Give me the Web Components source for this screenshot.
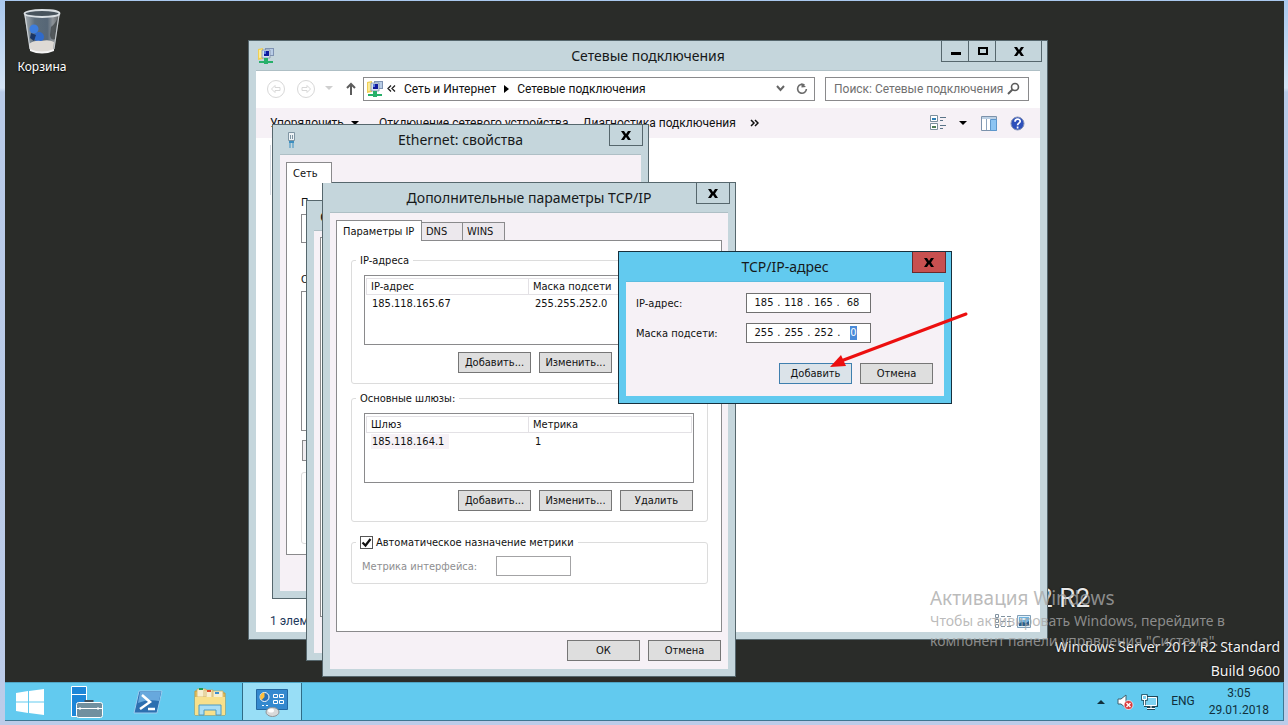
<!DOCTYPE html>
<html lang="ru">
<head>
<meta charset="utf-8">
<title>Сетевые подключения</title>
<style>
html, body { height: 100%; margin: 0; }
body {
  --ui: "Noto Sans", "Open Sans", sans-serif;
  --nav: Roboto, "Noto Sans", sans-serif;
  --dlg: "DejaVu Sans Condensed", "DejaVu Sans", sans-serif;
  --face: #f6f1f6;
  --line: #8a8a8c;
  font: 12px/16px var(--ui);
  color: #111;
  overflow: hidden;
}
</style>
</head>
<body>
<remote-desktop></remote-desktop>

<script>
const define = (name, html, setup) => {
  const template = document.createElement('template');
  template.innerHTML = html;
  customElements.define(name, class extends HTMLElement {
    constructor() {
      super();
      this.attachShadow({ mode: 'open' }).append(template.content.cloneNode(true));
    }
    connectedCallback() {
      if (setup && !this.ready) { this.ready = true; setup(this, this.shadowRoot); }
    }
  });
};

/* Window frame with title bar and caption buttons */
define('desk-window', `
<style>
:host { display: flex; flex-direction: column; box-sizing: border-box; background: #c5d6dc; border: 1px solid #56676d; padding: 0 7px 7px; --edge: #aebfc5; }
:host([active]) { background: #62caef; border-color: #17303d; --edge: #5bbde0; }
header { display: grid; grid-template-columns: 1fr auto 1fr; height: 29px; flex: none; }
h2 { margin: 0; font: 14px/29px var(--ui); grid-column: 2; white-space: nowrap; color: #16191a; }
.icon { display: flex; align-items: center; padding-left: 2px; }
.ctl { display: flex; justify-content: flex-end; align-items: flex-start; margin-right: -2px; }
button { box-sizing: border-box; height: 21px; width: 34px; padding: 0; border: 1px solid #56676d; border-top: 0; background: none; display: grid; place-items: center; }
.min, .max { display: none; width: 27px; border-right: 0; }
:host([resizable]) .min, :host([resizable]) .max { display: grid; }
:host([resizable]) .close { width: 47px; }
:host([active]) .close { background: #c75050; border-color: #6b2a2c; }
:host([bare]) .ctl { visibility: hidden; }
main { flex: 1; min-height: 0; display: flex; flex-direction: column; background: var(--face); border: solid var(--edge); border-width: 1px 0 0; }
:host([resizable]) main { background: #fff; }
</style>
<header>
  <div class="icon"><slot name="icon"></slot></div>
  <h2></h2>
  <div class="ctl">
    <button class="min" aria-label="Свернуть"><svg width="11" height="10"><path d="M1 6h10v3H1z"/></svg></button>
    <button class="max" aria-label="Развернуть"><svg width="11" height="10"><path d="M2 2h8v6H2z" fill="none" stroke="#000" stroke-width="2"/></svg></button>
    <button class="close" aria-label="Закрыть"><svg width="10" height="9"><path d="M0 0h3l2 3 2-3h3L7 4.500l3 4.500H7L5 6 3 9H0l3-4.500z"/></svg></button>
  </div>
</header>
<main><slot></slot></main>`, (el, root) => { root.querySelector('h2').textContent = el.getAttribute('caption'); });

define('dlg-button', `
<style>
:host { display: block; }
button { box-sizing: border-box; width: 73px; height: 21px; padding: 0; font: 11px/17px var(--dlg); color: #111; background: #dedede; border: 1px solid #767676; white-space: nowrap; }
:host([default]) button { border-color: #3f7fae; background: #dbe3e9; }
</style>
<button type="button"><slot></slot></button>`);

define('group-box', `
<style>
:host { display: block; }
fieldset { margin: 0; padding: 0 13px 10px 12px; border: 1px solid #dcdcdc; border-radius: 3px; min-width: 0; }
:host([checkable]) fieldset { padding-bottom: 7px; }
legend { margin-left: -8px; padding: 0 4px; font: 11px/15px var(--dlg); }
label { display: flex; align-items: center; gap: 3px; }
input { appearance: none; width: 13px; height: 13px; margin: 0; border: 1px solid #555; background: #fff; display: grid; }
input:checked { background: #fff url("data:image/svg+xml,%3Csvg xmlns='http://www.w3.org/2000/svg' viewBox='0 0 11 11'%3E%3Cpath d='M1.500 5.500l3 3L9.500 2' fill='none' stroke='%23111' stroke-width='2.200'/%3E%3C/svg%3E"); }
</style>
<fieldset><legend></legend><slot></slot></fieldset>`, (el, root) => {
  const legend = root.querySelector('legend');
  if (el.hasAttribute('checkable')) {
    legend.innerHTML = '<label><input type="checkbox" checked><span></span></label>';
    legend.querySelector('span').textContent = el.getAttribute('caption');
  } else legend.textContent = el.getAttribute('caption');
});

define('list-table', `
<style>
:host { display: block; box-sizing: border-box; height: 70px; border: 1px solid var(--line); background: #fff; padding: 2px 1px; font: 11px/15px var(--dlg); }
table { width: 100%; border-collapse: separate; border-spacing: 0; table-layout: fixed; }
th, td { font-weight: normal; text-align: left; padding: 0 4px; }
th { height: 15px; border: 1px solid #e3e1e5; border-left-width: 0; }
th:first-child { border-left-width: 1px; width: 153px; }
td { padding: 1px 6px 0; }
span { display: inline-block; }
:host([marked]) td:first-child span { background: var(--face); padding: 0 5px 0 1px; margin-left: -1px; }
</style>
<table><thead><tr></tr></thead><tbody><tr></tr></tbody></table>`, (el, root) => {
  const fill = (row, tag, list) => list.split('|').forEach(t => {
    const cell = document.createElement(tag), span = document.createElement('span');
    span.textContent = t; cell.append(span); row.append(cell);
  });
  fill(root.querySelector('thead tr'), 'th', el.getAttribute('head'));
  fill(root.querySelector('tbody tr'), 'td', el.getAttribute('row'));
});

/* Four-octet address entry */
define('ip-field', `
<style>
:host { display: flex; align-items: center; justify-content: space-between; font: 11px/15px var(--dlg); }
.box { box-sizing: border-box; width: 125px; height: 20px; padding: 0 4px; display: flex; align-items: center; background: #fff; border: 1px solid #707070; }
.part { width: 26px; display: flex; justify-content: center; }
i { width: 4px; font-style: normal; line-height: 14px; text-align: center; }
input { width: 26px; height: 14px; padding: 0; border: 0; text-align: center; background: none; font: 11px/14px var(--dlg); color: #111; outline: 0; }
.sel input { width: 7px; background: #4a8ad8; color: #fff; }
</style>
<label for="a"></label><div class="box"></div>`, (el, root) => {
  root.querySelector('label').textContent = el.getAttribute('caption');
  const box = root.querySelector('.box');
  el.getAttribute('value').split('.').forEach((v, n) => {
    if (n) { const dot = document.createElement('i'); dot.textContent = '.'; box.append(dot); }
    const part = document.createElement('span'), input = document.createElement('input');
    part.className = 'part' + (n === 3 && el.hasAttribute('selected') ? ' sel' : '');
    if (n) input.setAttribute('aria-label', el.getAttribute('caption') + ' ' + (n + 1)); else input.id = 'a';
    input.value = v; part.append(input); box.append(part);
  });
});

define('tab-panel', `
<style>
:host { display: flex; flex-direction: column; font: 11px/15px var(--dlg); }
nav { display: flex; align-items: flex-end; flex: none; }
button { box-sizing: border-box; height: 18px; padding: 0 4px; text-align: left; font: inherit; color: #111; background: #ece8ed; border: 1px solid var(--line); border-width: 1px 1px 0 0; white-space: nowrap; }
button:first-child { height: 21px; margin-bottom: -1px; padding: 0 6px; background: #fff; border-left-width: 1px; z-index: 1; }
section { flex: 1; min-height: 0; background: #fff; border: 1px solid var(--line); padding: 0 13px 0 14px; display: flex; flex-direction: column; }
</style>
<nav role="tablist"></nav><section><slot></slot></section>`, (el, root) => {
  (el.getAttribute('tabs') || '').split('|').filter(Boolean).forEach((t, n) => {
    const [text, width] = t.split(':'), b = document.createElement('button');
    b.type = 'button'; b.role = 'tab'; b.textContent = text; b.style.width = width + 'px';
    root.querySelector('nav').append(b);
  });
});

define('net-icon', `
<style>:host { display: block; width: 16px; height: 16px; } svg { display: block; }</style>
<svg width="16" height="16" viewBox="0 0 16 16">
  <path d="M0 1l5-1v11l-5 1z" fill="#f0cf55"/><path d="M1 2l3-.5v8L1 10z" fill="#fbec9a"/>
  <path d="M7 0h9v8H7z" fill="#7f93b3"/><path d="M8 1h7v6H8z" fill="#b9cde6"/>
  <path d="M4 2h8v8H4z" fill="#d7e2ee" stroke="#8291a8" stroke-width=".8"/><path d="M6 3h5v5H6z" fill="#10199c"/><path d="M6 3h2v3H6z" fill="#5d7fe0"/>
  <path d="M6 10h4v3h5v2h-5v1H6v-1H1v-2h5z" fill="#27b06a"/>
</svg>`);

/* Address row, command row, and status row of the folder window */
define('folder-view', `
<style>
:host { display: flex; flex-direction: column; flex: 1; min-height: 0; font: 12px/16px var(--nav); color: #111; }
.nav { display: flex; align-items: center; height: 35px; padding: 0 11px 2px 10px; flex: none; }
.nav button { border: 0; background: none; padding: 0; display: grid; place-items: center; height: 20px; width: 20px; }
.nav .fwd { margin-left: 10px; }
.nav .hist { margin-left: 3px; }
.nav .up { margin: 0 2px; }
.addr { flex: 1; min-width: 0; display: flex; align-items: center; gap: 8px; height: 22px; border: 1px solid var(--line); margin-right: 10px; padding: 0 2px 0 3px; }
.addr a { color: inherit; text-decoration: none; white-space: nowrap; }
.addr .gap { flex: 1; }
.addr net-icon { margin-right: -4px; }
.search { display: flex; align-items: center; width: 202px; height: 22px; border: 1px solid var(--line); }
.search input { flex: 1; min-width: 0; border: 0; background: none; padding: 0 0 0 8px; font: inherit; outline: 0; }
.search input::placeholder { color: #707070; opacity: 1; }
.search svg { margin: 0 8px 0 0; }
.bar { display: flex; align-items: center; height: 30px; padding: 0 15px 0 14px; background: var(--face); flex: none; }
.bar button { border: 0; background: none; padding: 0; font: inherit; color: inherit; white-space: nowrap; display: flex; align-items: center; }
.cmd { margin-right: 14px; }
.cmd svg { margin-left: 7px; }
.org { margin-right: 20px; }
.bar .push { margin-left: auto; }
.list { flex: 1; padding: 7px 14px; }
.item { width: 60px; height: 50px; border-left: 1px solid #d8dde4; }
footer { display: flex; align-items: center; height: 22px; padding: 0 9px 0 14px; color: #1e395b; flex: none; }
footer svg { margin-left: 6px; } footer .push { margin-left: auto; }
</style>
<div class="nav">
  <button aria-label="Назад"><svg width="20" height="20" fill="none" stroke="#d8d8d8"><circle cx="10" cy="10" r="8.500"/><path d="M5.500 10L9 6.500v2h5v3H9v2z"/></svg></button>
  <button class="fwd" aria-label="Вперед"><svg width="20" height="20" fill="none" stroke="#d8d8d8"><circle cx="10" cy="10" r="8.500"/><path d="M14.500 10L11 6.500v2H6v3h5v2z"/></svg></button>
  <button class="hist" aria-label="Журнал"><svg width="8" height="5"><path d="M0 0h8L4 4z" fill="#cfcfcf"/></svg></button>
  <button class="up" aria-label="Вверх"><svg width="10" height="13" fill="none" stroke="#5c5c5c" stroke-width="2"><path d="M5 13V2M1 6l4-4 4 4"/></svg></button>
  <div class="addr">
    <net-icon></net-icon><svg width="9" height="7" fill="none" stroke="#222" stroke-width="1.300"><path d="M4 .5L1 3.500l3 3M8 .5L5 3.500l3 3"/></svg><a href="#">Сеть и Интернет</a>
    <svg width="5" height="8"><path d="M0 0l5 4-5 4z"/></svg><a href="#">Сетевые подключения</a>
    <span class="gap"></span>
    <button aria-label="Предыдущие расположения" style="margin-right:-6px"><svg width="9" height="7" fill="none" stroke="#666" stroke-width="2"><path d="M1 1l3.500 4L8 1"/></svg></button>
    <button aria-label="Обновить"><svg width="12" height="12" fill="none" stroke="#6b6b6b" stroke-width="1.600"><path d="M8.500 2.200A4.400 4.400 0 1 0 10.400 6"/><path d="M5.500 0v4.500L10 4z" fill="#6b6b6b" stroke="none"/></svg></button>
  </div>
  <div class="search"><input type="text" aria-label="Поиск" placeholder="Поиск: Сетевые подключения"><svg width="13" height="13" fill="none" stroke="#5c5c5c"><circle cx="8" cy="5" r="3.500" stroke-width="1.600"/><path d="M5.500 7.500L1 12" stroke-width="2"/></svg></div>
</div>
<div class="bar">
  <button class="cmd org">Упорядочить<svg width="8" height="4"><path d="M0 0h8L4 4z"/></svg></button>
  <button class="cmd">Отключение сетевого устройства</button>
  <button class="cmd">Диагностика подключения</button>
  <button aria-label="Дополнительно"><svg width="9" height="8" fill="none" stroke="#111" stroke-width="1.500"><path d="M1 1l3 3-3 3M5 1l3 3-3 3"/></svg></button>
  <button class="push" aria-label="Вид"><svg width="33" height="16"><g fill="#fff" stroke="#7d8f9d"><path d="M.5.5h7v6h-7zM.5 8.500h7v6h-7z"/></g><path d="M2 3h4v2H2z" fill="#2f7fb4"/><path d="M2 11h4v2H2z" fill="#4f7a52"/><path d="M10 2.500h6M10 5.500h3M10 10.500h6M10 13.500h3" stroke="#5a7488"/></svg></button>
  <svg width="8" height="4" style="margin-left:-4px"><path d="M0 0h8L4 4z"/></svg>
  <button aria-label="Область просмотра" style="margin-left:14px"><svg width="17" height="15"><path d="M.5.500h15v14H.500z" fill="#fff" stroke="#7c92ab"/><path d="M1 1h14v2H1z" fill="#bcd0e4"/><path d="M5.500 3v11" stroke="#8ea4bd"/><path d="M9.500 3.500h6v11h-6z" fill="#8cc4f2" stroke="#5c97cd"/></svg></button>
  <button aria-label="Справка" style="margin-left:12px"><svg width="15" height="15"><circle cx="7.500" cy="7.500" r="6.500" fill="#2e50bb" stroke="#8493b8"/><path d="M5 5.800c0-3.600 5.200-3.400 5.200-.6 0 2-2.600 1.800-2.600 4M7.600 10.500v2" fill="none" stroke="#fff" stroke-width="1.700"/></svg></button>
</div>
<div class="list"><div class="item"></div></div>
<footer><span>1 элемент</span>
  <svg class="push" width="16" height="14"><g fill="none" stroke="#8293a0"><path d="M.5.500h3v3h-3zM.5 5.500h3v3h-3zM.5 10.500h3v3h-3z"/><path d="M6 2.500h4M12 2.500h4M6 7.500h4M12 7.500h4M6 12.500h4M12 12.500h4"/></g></svg>
  <svg width="14" height="13"><path d="M.5.500h13v12H.500z" fill="#e3f1fb" stroke="#7f9fb7"/><path d="M2 2h10v9H2z" fill="#6db3e0"/><path d="M2 11V8l4-1 3 1 3-2v5z" fill="#2a5f8c"/><path d="M3 3h6v2H3z" fill="#d3edfb"/></svg>
</footer>`);

define('ethernet-form', `
<style>
:host { display: flex; flex-direction: column; flex: 1; padding: 7px 6px 36px 6px; font: 11px/15px var(--dlg); }
tab-panel { flex: 1; }
p { margin: 12px 0 4px; } p + div { border: 1px solid var(--line); height: 27px; flex: none; }
.second { margin-top: 29px; }
.second + div { height: 138px; }
.btn { margin: 9px 0 0 1px; width: 80px; height: 19px; background: #f0edf1; border: 1px solid var(--line); }
.grp { margin-top: 11px; height: 70px; border: 1px solid #dcdcdc; border-radius: 3px; }
</style>
<tab-panel tabs="Сеть:46"><p>П</p><div></div><p class="second">О</p><div></div><div class="btn"></div><div class="grp"></div></tab-panel>`);

define('protocol-form', `
<style>
:host { display: flex; flex: 1; padding: 6px 6px 36px; }
div { flex: 1; border: 1px solid var(--line); background: #fff; }
</style><div></div>`);

define('advanced-form', `
<style>
:host { display: flex; flex-direction: column; flex: 1; min-height: 0; padding: 7px 6px 8px; font: 11px/15px var(--dlg); }
tab-panel { flex: 1; min-height: 0; }
group-box { flex: none; margin-top: 12px; }
group-box + group-box { margin-top: 7px; }
list-table { margin-top: 7px; }
.row { display: flex; justify-content: flex-end; gap: 8px; padding: 7px 1px 0 0; }
group-box.last { margin-top: 13px; }
.metric { display: flex; align-items: center; padding: 6px 0 0; }
.metric label { width: 134px; margin-left: -2px; color: #8e8e90; }
.metric input { box-sizing: border-box; width: 75px; height: 20px; border: 1px solid #a3a3a5; background: #fff; }
.actions { display: flex; justify-content: flex-end; gap: 8px; padding: 8px 1px 0; }
</style>
<tab-panel tabs="Параметры IP:86|DNS:41|WINS:42">
  <group-box caption="IP-адреса">
    <list-table head="IP-адрес|Маска подсети" row="185.118.165.67|255.255.252.0"></list-table>
    <div class="row"><dlg-button>Добавить...</dlg-button><dlg-button>Изменить...</dlg-button><dlg-button>Удалить</dlg-button></div>
  </group-box>
  <group-box caption="Основные шлюзы:">
    <list-table marked head="Шлюз|Метрика" row="185.118.164.1|1"></list-table>
    <div class="row"><dlg-button>Добавить...</dlg-button><dlg-button>Изменить...</dlg-button><dlg-button>Удалить</dlg-button></div>
  </group-box>
  <group-box class="last" checkable caption="Автоматическое назначение метрики">
    <div class="metric"><label for="metric">Метрика интерфейса:</label><input id="metric" disabled></div>
  </group-box>
</tab-panel>
<div class="actions"><dlg-button>ОК</dlg-button><dlg-button>Отмена</dlg-button></div>`);

define('address-form', `
<style>
:host { display: flex; flex-direction: column; gap: 10px; padding: 11px 10px 0; }
ip-field { width: 235px; }
.row { display: flex; justify-content: flex-end; gap: 8px; padding: 10px 1px 0 0; }
</style>
<ip-field caption="IP-адрес:" value="185.118.165.68"></ip-field>
<ip-field caption="Маска подсети:" value="255.255.252.0" selected></ip-field>
<div class="row"><dlg-button default>Добавить</dlg-button><dlg-button>Отмена</dlg-button></div>`);

define('recycle-bin', `
<style>
:host { display: flex; flex-direction: column; align-items: center; width: 74px; font: 12px/16px var(--ui); color: #fff; text-shadow: 0 1px 2px #000; }
svg { display: block; margin-bottom: 4px; }
</style>
<svg width="38" height="46" viewBox="0 0 38 46">
  <defs><linearGradient id="g"><stop offset="0" stop-color="#a9b0b4"/><stop offset=".3" stop-color="#5d6d7a"/><stop offset=".65" stop-color="#566676"/><stop offset=".8" stop-color="#8d9398"/><stop offset="1" stop-color="#5c6062"/></linearGradient></defs>
  <path d="M1 4h36l-6 37q-12 6-24 0z" fill="url(#g)"/>
  <path d="M28 18q5-4 7-10l-3 22q-4 2-5-4z" fill="#3c4143" opacity=".7"/>
  <circle cx="11" cy="20" r="4.500" fill="#3d7ddd"/><circle cx="16" cy="28" r="5" fill="#2f6acb"/><path d="M8 24l5 2-2 6-4-3z" fill="#1b3564"/>
  <path d="M6 35q5-4 12-3 8-2 13 1l-1 8q-12 6-23 0z" fill="#dedad5"/>
  <path d="M7 40q12 5 24 0v2q-12 5-24 0z" fill="#f5f5f5"/>
  <ellipse cx="19" cy="4.500" rx="17.500" ry="3.500" fill="#48545d" stroke="#d9dfe3" stroke-width="1.800"/>
  <path d="M2 6l5 34M36 6l-5 34" stroke="#dce1e4" stroke-width="1.200" opacity=".8"/>
</svg>
<span>Корзина</span>`);

define('build-mark', `
<style>
:host { display: flex; flex-direction: column; align-items: flex-end; font: 14px/24px var(--ui); color: #f2f2f2; text-shadow: 0 0 2px #000; white-space: nowrap; }
.big { font: 26px/32px var(--nav); padding-right: 190px; margin-bottom: 21px; color: #e8e8e8; }
</style>
<span class="big">2 R2</span><span>Windows Server 2012 R2 Standard</span><span>Build 9600</span>`);

define('activation-mark', `
<style>
:host { display: block; width: 320px; font: 14px/20px var(--ui); color: rgba(168,168,168,.78); pointer-events: none; white-space: nowrap; }
p { margin: 0; } .t { font-size: 19px; line-height: 26px; }
</style>
<p class="t">Активация Windows</p><p>Чтобы активировать Windows, перейдите в</p><p>компонент панели управления "Система".</p>`);

define('task-bar', `
<style>
:host { display: flex; align-items: stretch; box-sizing: border-box; height: 39px; background: #62caef; border: 1px solid #3f7791; border-left: 0; border-top-color: #4fa4c4; font: 12px/17px var(--nav); color: #10303c; }
button { box-sizing: border-box; width: 60px; margin: 0 1px; padding: 0; border: 1px solid transparent; border-width: 0 1px; background: none; display: grid; place-items: center; }
.start { width: 50px; margin: 0; } .on { background: #98def6; border-color: #2f6c87; }
.tray { margin-left: auto; display: flex; align-items: center; padding-right: 14px; }
.tray button { width: auto; margin: 0; border: 0; font: inherit; color: inherit; }
.clock { text-align: center; }
.tray .net { margin-left: 7px; } .tray .lang { margin: 0 14px 0 13px; }
.tray .vol { margin-left: 12px; }
</style>
<button class="start" aria-label="Пуск"><svg width="28" height="26" fill="#fff"><path d="M0 4l12-2v10.500H0zM13 2l15-2v12.500H13zM0 13.500h12V24L0 22zM13 13.500h15V26l-15-2z"/></svg></button>
<button aria-label="Диспетчер серверов"><svg width="34" height="34" stroke="#fff"><path d="M2.500 1.500h15v30h-15z" fill="#1d86d8"/><path d="M2 9.500h16" /><path d="M16.500 18v-2h7v2" fill="none" stroke="#40525f" stroke-width="2"/><rect x="7.500" y="17.500" width="26" height="15" rx="2" fill="#71909f"/><path d="M8 23.500h25M11 22v3M29 22v3" /></svg></button>
<button aria-label="PowerShell"><svg width="30" height="24"><path d="M6 1h23l-5 22H1z" fill="#2c6fb0" stroke="#9ccdf0"/><path d="M7 2h21l-2 9q-12-2-21 2z" fill="#67a8dd"/><path d="M9 5l8 7-10 7M15 19h7" fill="none" stroke="#fff" stroke-width="2.500"/></svg></button>
<button aria-label="Проводник"><svg width="34" height="30"><path d="M2 4h13l2 2h15v22H2z" fill="#e9c86a" stroke="#c29a3c"/><path d="M4 2h9v8H4zM11 3h9v8h-9zM19 4h11v8H19z" fill="#f7efd0" stroke="#cba950" stroke-width=".7"/><path d="M6 1h4v2H6z" fill="#1e9b54"/><path d="M14 3h4v2h-4z" fill="#e04a2a"/><path d="M22 5h4v2h-4z" fill="#3a8dd0"/><path d="M2 10h30v18H2z" fill="#f8e08b"/><path d="M6 28V18h22v10h-5v-5H11v5z" fill="#a9def5" stroke="#4a9ac6"/></svg></button>
<button class="on" aria-label="Панель управления"><svg width="34" height="30"><path d="M1.500 2.500h31v20h-31z" fill="#3489cf" stroke="#2468a2"/><circle cx="9.500" cy="10" r="4.500" fill="#276fb9" stroke="#fff"/><path d="M9.500 10V5.500a4.500 4.500 0 0 0-3 7.800z" fill="#ffbf3c"/><g fill="none" stroke="#fff"><path d="M18.500 7.500h4v3h-4zM24.500 7.500h4v3h-4zM18.500 13.500h4v3h-4zM24.500 13.500h4v3h-4zM7 18.500h2M11 18.500h2"/></g><ellipse cx="17.500" cy="25" rx="6.500" ry="4.500" fill="#d8d9da" stroke="#8f9396"/><ellipse cx="16" cy="23.500" rx="3" ry="2" fill="#fff"/></svg></button>
<div class="tray">
  <button aria-label="Скрытые значки"><svg width="8" height="4"><path d="M0 4l4-4 4 4z" fill="#10303c"/></svg></button>
  <button class="vol" aria-label="Громкость"><svg width="17" height="16"><path d="M1 5h3l5-4v13l-5-4H1z" fill="#fff" stroke="#41616f"/><circle cx="11.500" cy="11" r="4.500" fill="#d8393c" stroke="#fff" stroke-width=".7"/><path d="M9.500 9l4 4M13.500 9l-4 4" stroke="#fff" stroke-width="1.400"/></svg></button>
  <button class="net" aria-label="Сеть"><svg width="17" height="16" fill="#7ed3f1"><path d="M4.500 3.500h11v8h-11z" stroke="#1f4858" stroke-width="3"/><path d="M10 12v3M6 14.500h8" stroke="#1f4858" stroke-width="3"/><path d="M4.500 3.500h11v8h-11zM10 12v3M6 14.500h8" stroke="#fff"/><path d="M1.500 1.500h4v4h-4zM3.500 6v5" stroke="#1f4858" stroke-width="2.500"/><path d="M1.500 1.500h4v4h-4zM3.500 6v6" stroke="#fff"/></svg></button>
  <button class="lang">ENG</button>
  <div class="clock">3:05<br>29.01.2018</div>
</div>`);

define('red-arrow', `
<style>:host { display: block; pointer-events: none; } svg { display: block; }</style>
<svg width="142" height="62"><path d="M139 4L14 51" stroke="#ec0f0f" stroke-width="3" stroke-linecap="round"/><path d="M3 57L14 45l5 11z" fill="#ec0f0f"/></svg>`);

define('remote-desktop', `
<style>
:host { display: flex; box-sizing: border-box; height: 100vh; padding: 1px 4px 4px 5px; background: linear-gradient(#a9c8ee, #d5e4f5 88px, #b9cbe8 92px, #bccce9); }
.screen { position: relative; flex: 1; min-width: 0; display: flex; flex-direction: column; justify-content: space-between; background: #2a2c29; overflow: hidden; }
.screen > * { flex: none; }
desk-window, build-mark, activation-mark, red-arrow { position: absolute; }
recycle-bin { padding: 8px 0 0 0; }
build-mark { right: 4px; bottom: 38px; }
activation-mark { right: 34px; bottom: 70px; }
.folder { left: 243px; top: 39px; width: 800px; height: 600px; }
.ether { left: 267px; top: 123px; width: 377px; height: 475px; }
.proto { left: 301px; top: 199px; width: 400px; height: 461px; }
.adv { left: 317px; top: 181px; width: 414px; height: 495px; }
.addr { left: 613px; top: 250px; width: 334px; height: 153px; }
red-arrow { left: 822px; top: 309px; }
b { font: 15px/30px var(--ui); padding-left: 4px; }
</style>
<div class="screen">
  <recycle-bin></recycle-bin>
  <build-mark></build-mark>
  <desk-window class="folder" resizable caption="Сетевые подключения"><net-icon slot="icon"></net-icon><folder-view></folder-view></desk-window>
  <desk-window class="ether" caption="Ethernet: свойства">
    <svg slot="icon" width="18" height="18"><path d="M6.500 1.500h6v8h-6z" fill="#edf3f6" stroke="#7f95a3"/><path d="M8.500 4v4M10.500 4v4" stroke="#7f95a3"/><path d="M7 10h5v2H7z" fill="#3c8fc0"/><path d="M8 12v5M11 12v5" stroke="#3c8fc0"/></svg>
    <ethernet-form></ethernet-form></desk-window>
  <desk-window class="proto" bare caption=""><b slot="icon">С</b><protocol-form></protocol-form></desk-window>
  <desk-window class="adv" caption="Дополнительные параметры TCP/IP"><advanced-form></advanced-form></desk-window>
  <desk-window class="addr" active caption="TCP/IP-адрес"><address-form></address-form></desk-window>
  <red-arrow></red-arrow>
  <activation-mark></activation-mark>
  <task-bar></task-bar>
</div>`);
</script>
</body>
</html>
